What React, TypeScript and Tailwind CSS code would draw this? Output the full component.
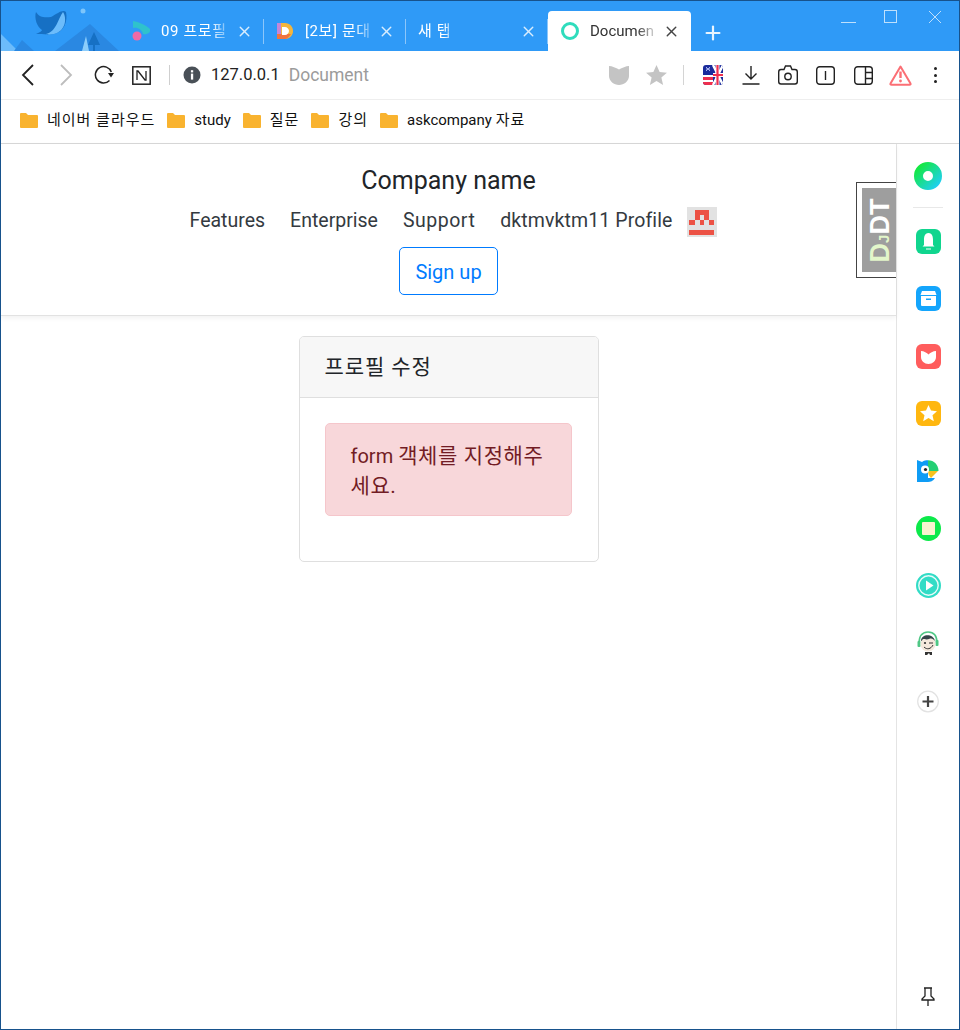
import { X, Plus } from 'lucide-react'

function Wallpaper() {
  return (
    <svg width="121" height="50" viewBox="0 0 121 50" className="shrink-0">
      <path d="M0 33 L17 50 H0Z" fill="#6cbcfb" />
      <path d="M13 50 L21 39 L33 50Z" fill="#2a88e2" />
      <path d="M54 50 L89 23 L118 50Z" fill="#2a88e2" />
      <path d="M81 50 L85 35 L88 50Z" fill="#8ccdfb" />
      <path d="M87 44 L93 31 L99 44 H94 V50 H92 V44Z" fill="#1670c4" />
      <circle cx="82" cy="10" r="2.5" fill="#7cc5fb" />
      <path d="M35 11 C38 16 43 17 50 16 C57 12 62 8 65 11 C67 20 63 31 53 33 C47 34 40 33 35 33 C39 31 41 30 41 29 C36 26 33 17 35 11Z" fill="#1670c4" />
      <path d="M62 11 C66 17 65 30 53 33 C47 34 45 33 45 33 C55 31 57 18 62 11Z" fill="#6cbcfb" />
    </svg>
  )
}

function TabFavicon({ kind }: { kind: 'first' | 'dict' | 'ring' }) {
  if (kind === 'first') {
    return (
      <svg width="18" height="21" viewBox="0 0 18 21" className="shrink-0">
        <path d="M1 0 C7 1 14 4 18 8 C19 11 16 14 11 13 C10 9 6 6 1 7Z" fill="#2fc2cc" />
        <circle cx="5" cy="15" r="4.5" fill="#f06aa6" />
      </svg>
    )
  }
  if (kind === 'dict') {
    return (
      <svg width="18" height="18" viewBox="0 0 18 18" className="shrink-0">
        <path d="M1 1 H9 C14 1 17 5 17 9 C17 13 14 17 9 17 H1Z" fill="#f4b63c" />
        <path d="M1 1 H5 V17 H1Z" fill="#c587d8" />
        <path d="M1 12 H15 C13 15 11 17 9 17 H1Z" fill="#f0743e" />
        <path d="M6 5 H9 C11 5 13 7 13 9 C13 11 11 13 9 13 H6Z" fill="#fff" />
      </svg>
    )
  }
  return <span className="w-[18px] h-[18px] shrink-0 rounded-full border-[3px] border-[#2fdcbc]" />
}

function Tab({ title, icon }: { title: string; icon?: 'first' | 'dict' }) {
  return (
    <div className="relative w-[142px] h-10 flex items-center shrink-0 text-white">
      {icon === 'first' && <span className="w-[39px] flex pl-[10px]"><TabFavicon kind={icon} /></span>}
      {icon === 'dict' && <span className="w-[41px] flex pl-[12px]"><TabFavicon kind={icon} /></span>}
      {!icon && <span className="w-3" />}
      <span className="flex-1 text-[15px] tracking-[0.6px] whitespace-nowrap">
        <span className="inline-block pr-1 [mask-image:linear-gradient(90deg,#000_70%,rgba(0,0,0,0.15))]">{title}</span>
      </span>
      <X size={17} strokeWidth={2} className="text-[#d9edfe] shrink-0 mr-[11px]" />
      <span className="absolute right-0 top-[8px] h-[25px] w-px bg-[#8cc6fa]" />
    </div>
  )
}

function Toolbar() {
  return (
    <div className="h-[49px] flex items-center border-b border-[#eeeeee] bg-white shrink-0">
      <svg width="14" height="22" viewBox="0 0 14 22" fill="none" stroke="#222" strokeWidth="1.8" className="ml-[20px]"><path d="M12 1 L2 11 L12 21" /></svg>
      <svg width="14" height="22" viewBox="0 0 14 22" fill="none" stroke="#bdbdbd" strokeWidth="1.8" className="ml-[24px]"><path d="M2 1 L12 11 L2 21" /></svg>
      <svg width="20" height="20" viewBox="0 0 20 20" fill="none" className="ml-[21px]">
        <path d="M15.5 15.5 A8.2 8.2 0 1 1 17.3 7" stroke="#222" strokeWidth="1.5" />
        <path d="M14 8 L20 8 L17 12.5Z" fill="#222" />
      </svg>
      <svg width="19" height="19" viewBox="0 0 19 19" fill="none" className="ml-[18px]">
        <rect x="0.8" y="0.8" width="17.4" height="17.4" stroke="#222" strokeWidth="1.5" />
        <path d="M5 14 V5 H6 L13 14 H14 V5" stroke="#222" strokeWidth="1.3" />
      </svg>
      <span className="w-px h-5 bg-[#cfcfcf] ml-[18px]" />
      <svg width="18" height="18" viewBox="0 0 18 18" className="ml-[13px]">
        <circle cx="9" cy="9" r="8.5" fill="#495057" />
        <rect x="7.9" y="7.6" width="2.3" height="6" fill="#fff" />
        <rect x="7.9" y="4.2" width="2.3" height="2.2" fill="#fff" />
      </svg>
      <span className="ml-[10px] pt-px text-[16.5px] text-[#222]">127.0.0.1</span>
      <span className="ml-[9px] pt-px text-[17.5px] text-[#9b9b9b]">Document</span>
      <div className="ml-auto flex items-center">
        <svg width="20" height="20" viewBox="0 0 20 20"><path d="M0 1 C3 1 7 3 10 4.5 C13 3 17 1 20 1 V11 C20 16 15 20 10 20 C5 20 0 16 0 11Z" fill="#c4c4c4" /></svg>
        <svg width="21" height="20" viewBox="0 0 24 23" className="ml-[17px]"><path d="M12 0 L15.6 8 L24 8.8 L17.6 14.4 L19.6 23 L12 18.4 L4.4 23 L6.4 14.4 L0 8.8 L8.4 8Z" fill="#c4c4c4" /></svg>
        <span className="w-px h-5 bg-[#d4d4d4] ml-[16px]" />
        <svg width="20" height="20" viewBox="0 0 20 20" className="ml-[19px]">
          <defs><clipPath id="flagClip"><rect width="20" height="20" rx="3" /></clipPath></defs>
          <g clipPath="url(#flagClip)">
            <rect width="20" height="20" fill="#1b2b9b" />
            <path d="M0 10 H10 V12 H0Z M0 15 H10 V17 H0Z" fill="#fff" />
            <path d="M0 12 H10 V15 H0Z M0 17 H10 V20 H0Z" fill="#ee2f4e" />
            <path d="M3 2 L5 4 L7 2 M3 6 L5 4 L7 6 M3 4 H7" stroke="#a8b4f0" strokeWidth="1" fill="none" />
            <path d="M10 0 L20 20 M20 0 L10 20" stroke="#fff" strokeWidth="2.4" />
            <path d="M10 10 H20 M14.5 0 V20" stroke="#fff" strokeWidth="4" />
            <path d="M10 10 H20 M14.5 0 V20" stroke="#ee2f4e" strokeWidth="2.2" />
          </g>
        </svg>
        <svg width="18" height="19" viewBox="0 0 18 19" fill="none" stroke="#222" strokeWidth="1.4" className="ml-[19px]">
          <path d="M9 0 V13 M3.5 7.5 L9 13 L14.5 7.5 M0.5 18 H17.5" />
        </svg>
        <svg width="20" height="20" viewBox="0 0 20 20" fill="none" stroke="#222" strokeWidth="1.4" className="ml-[18px]">
          <path d="M3 4.5 H6 L7.5 1 H12.5 L14 4.5 H17 Q19.3 4.5 19.3 7 V16.5 Q19.3 19 17 19 H3 Q0.7 19 0.7 16.5 V7 Q0.7 4.5 3 4.5Z" />
          <circle cx="10" cy="11.5" r="3.2" />
        </svg>
        <svg width="19" height="19" viewBox="0 0 19 19" fill="none" stroke="#222" strokeWidth="1.4" className="ml-[18px]">
          <rect x="0.7" y="0.7" width="17.6" height="17.6" rx="3" />
          <path d="M9.5 5 V14" />
        </svg>
        <svg width="19" height="19" viewBox="0 0 19 19" fill="none" stroke="#222" strokeWidth="1.4" className="ml-[19px]">
          <rect x="0.7" y="0.7" width="17.6" height="17.6" rx="3" />
          <path d="M11.5 0.7 V18.3 M11.5 6.5 H18.3 M11.5 12.5 H18.3" />
        </svg>
        <svg width="23" height="21" viewBox="0 0 23 21" fill="none" className="ml-[16px]">
          <path d="M11.5 1.5 L21.5 18.5 Q22 19.8 20.5 19.8 H2.5 Q1 19.8 1.5 18.5Z" stroke="#fb6f75" strokeWidth="2" strokeLinejoin="round" />
          <path d="M11.5 6.5 V13" stroke="#fb6f75" strokeWidth="2.4" />
          <circle cx="11.5" cy="16" r="1.4" fill="#fb6f75" />
        </svg>
        <span className="ml-[22px] mr-[22px] flex flex-col gap-[3.5px]">
          <span className="w-[3px] h-[3px] rounded-full bg-[#222]" />
          <span className="w-[3px] h-[3px] rounded-full bg-[#222]" />
          <span className="w-[3px] h-[3px] rounded-full bg-[#222]" />
        </span>
      </div>
    </div>
  )
}

function FolderIcon() {
  return (
    <svg width="18" height="15" viewBox="0 0 18 15" className="shrink-0">
      <path d="M0 1 Q0 0 1 0 H6 L8 2 H17 Q18 2 18 3 V14 Q18 15 17 15 H1 Q0 15 0 14Z" fill="#f9b32f" />
    </svg>
  )
}

function Ko({ children }: { children: string }) {
  return <span className="text-[15px] tracking-[1px]">{children}</span>
}

const bookmarks = [
  { latin: '', ko: '네이버 클라우드' },
  { latin: 'study', ko: '' },
  { latin: '', ko: '질문' },
  { latin: '', ko: '강의' },
  { latin: 'askcompany ', ko: '자료' },
]

function Bookmarks() {
  return (
    <div className="h-11 flex items-center pl-[19px] pb-[3px] gap-3 bg-white border-b border-[#d8d8d8] shrink-0">
      {bookmarks.map((b) => (
        <div key={b.latin + b.ko} className="flex items-center gap-[9px] text-[15px] text-[#111]">
          <FolderIcon />
          <span className="whitespace-pre">{b.latin}{b.ko && <Ko>{b.ko}</Ko>}</span>
        </div>
      ))}
    </div>
  )
}

function Identicon() {
  return (
    <svg width="30" height="30" viewBox="0 0 30 30" className="ml-[15px] shrink-0">
      <rect width="30" height="30" fill="#e2e2e2" />
      <path d="M8 3 H22 V8 H8Z M8 8 H13 V13 H8Z M17 8 H22 V13 H17Z M2 13 H8 V18 H2Z M13 13 H17 V18 H13Z M22 13 H27 V18 H22Z M2 23 H27 V28 H2Z" fill="#ec5245" />
    </svg>
  )
}

function Navbar() {
  return (
    <div className="h-[172px] flex flex-col items-center border-b border-[#e2e2e2] shadow-[0_2px_5px_rgba(0,0,0,0.06)] pt-[22px]">
      <h5 className="text-[25px] leading-[30px] text-[#212529]">Company name</h5>
      <nav className="flex items-start mt-[10px] pl-[10px] h-[32px] text-[19.5px] leading-[30px] text-[#343a40] gap-[25px]">
        <span>Features</span>
        <span>Enterprise</span>
        <span className="tracking-[0.5px]">Support</span>
        <span className="flex items-start tracking-[0.1px]">dktmvktm11 Profile<span className="pt-[1px]"><Identicon /></span></span>
      </nav>
      <button className="mt-[9px] w-[99px] h-12 pt-px rounded-[5px] border border-[#007bff] text-[#007bff] text-[20px]">Sign up</button>
    </div>
  )
}

function ProfileCard() {
  return (
    <div className="w-[300px] mx-auto mt-[20px] border border-[#dfdfdf] rounded-[5px] overflow-hidden">
      <div className="h-[61px] flex items-center px-[25px] pt-[2px] bg-[#f7f7f7] border-b border-[#dfdfdf] text-[21px] tracking-[0.9px] text-[#212529]">프로필 수정</div>
      <div className="pl-[25px] pr-[26px] pt-[25px] pb-[45px]">
        <div className="pl-[25px] pr-[20px] pt-[17px] pb-[14px] bg-[#f8d7da] border border-[#f5c6cb] rounded-[5px] text-[20px] leading-[30px] text-[#721c24] whitespace-nowrap">
          <div>form <span className="text-[21px] tracking-[0.6px]">객체를 지정해주</span></div>
          <div className="text-[21px] tracking-[0.6px]">세요.</div>
        </div>
      </div>
    </div>
  )
}

function Rounded({ bg, children }: { bg: string; children: React.ReactNode }) {
  return (
    <svg width="25" height="25" viewBox="0 0 25 25">
      <rect width="25" height="25" rx="6" fill={bg} />
      {children}
    </svg>
  )
}

function Sidebar() {
  return (
    <aside className="w-[63px] shrink-0 flex flex-col items-center border-l border-[#e4e4e4] pt-[18px] pb-[23px]">
      <svg width="28" height="28" viewBox="0 0 28 28">
        <defs>
          <linearGradient id="ringGrad" x1="0" y1="0" x2="1" y2="1"><stop offset="0" stopColor="#14e83f" /><stop offset="1" stopColor="#1fd0ee" /></linearGradient>
        </defs>
        <circle cx="14" cy="14" r="9.5" fill="none" stroke="url(#ringGrad)" strokeWidth="9" />
      </svg>
      <span className="w-[30px] h-px bg-[#e8e8e8] mt-[17px] mb-[21px]" />
      <div className="flex flex-col items-center gap-[32.4px] [&>*]:h-[25px]">
        <Rounded bg="#10d58e">
          <path d="M12.5 4 C8.5 4 8 8 8 11 V16 L6.5 17.5 H18.5 L17 16 V11 C17 8 16.5 4 12.5 4Z" fill="#fff" />
          <path d="M10 19.5 H15 V20.5 H10Z" fill="#fff" />
        </Rounded>
        <Rounded bg="#14a5fc">
          <path d="M6 5 H19 L20.5 9 H4.5Z M5 10 H20 V19 Q20 20 19 20 H6 Q5 20 5 19Z" fill="#fff" />
          <rect x="10" y="12.5" width="5" height="1.5" fill="#14a5fc" />
        </Rounded>
        <Rounded bg="#ff5d5d">
          <path d="M5 7 C8 7 11 9 12.5 10.5 C14 9 17 7 20 7 V13 C20 17 16.5 20 12.5 20 C8.5 20 5 17 5 13Z" fill="#fff" />
        </Rounded>
        <Rounded bg="#ffb70f">
          <path d="M12.5 4 L15 9.6 L21 10.2 L16.5 14.2 L17.8 20.2 L12.5 17.1 L7.2 20.2 L8.5 14.2 L4 10.2 L10 9.6Z" fill="#fff" />
        </Rounded>
        <svg width="22" height="25" viewBox="0 0 22 25">
          <path d="M0 1 L5 3 C7 1.5 9 1.3 11 1.3 V23 H0Z" fill="#0f9cf5" />
          <path d="M11 1.3 C17 1.3 21.5 6 21.5 12 H11Z" fill="#24cf74" />
          <path d="M11 12 H21 L14 19 C12 17 11 15 11 12Z" fill="#f7c21e" />
          <path d="M11 19 H18 C16 22 13.5 23 11 23Z" fill="#0f9cf5" />
          <circle cx="8" cy="10.5" r="4" fill="#fff" />
          <circle cx="8.5" cy="10.5" r="1.6" fill="#222" />
        </svg>
        <svg width="25" height="25" viewBox="0 0 25 25">
          <circle cx="12.5" cy="12.5" r="12.5" fill="#0ce94a" />
          <rect x="6" y="6" width="13" height="13" rx="1" fill="#f8f3cf" />
        </svg>
        <svg width="25" height="25" viewBox="0 0 25 25">
          <circle cx="12.5" cy="12.5" r="12.5" fill="#32dcc6" />
          <circle cx="12.5" cy="12.5" r="9.7" fill="none" stroke="#e8fbf8" strokeWidth="1.4" />
          <path d="M10 7.5 L17.5 12.5 L10 17.5Z" fill="#fff" />
        </svg>
        <svg width="22" height="25" viewBox="0 0 22 25">
          <path d="M2 13 C2 4 6 1 11 1 C16 1 20 4 20 12" fill="none" stroke="#4fc785" strokeWidth="1.6" />
          <rect x="0.5" y="10" width="3" height="6" rx="1" fill="#4fc785" />
          <rect x="18.5" y="9" width="3" height="6" rx="1" fill="#4fc785" />
          <ellipse cx="11" cy="13" rx="7.5" ry="7.5" fill="#f5e8dc" />
          <path d="M4 10 C4 3 16 2 18 10 C16 8 15 7 12 8 C10 9 7 8 6 8 C5 9 5 10 4 10Z" fill="#36454a" />
          <circle cx="8" cy="12" r="1.1" fill="#333" />
          <path d="M12 12 H16 M7 16 C10 19 14 18 16 14" stroke="#333" strokeWidth="1" fill="none" />
          <path d="M8 21 H15 V24 H13 L12 22 L10 24 H8Z" fill="#333" />
        </svg>
        <svg width="22" height="25" viewBox="0 0 22 25" className="translate-y-[1px]">
          <circle cx="11" cy="12.5" r="10.3" fill="#fff" stroke="#e2e2e2" strokeWidth="1.2" />
          <path d="M11 7 V18 M5.5 12.5 H16.5" stroke="#444" strokeWidth="2.2" />
        </svg>
      </div>
      <svg width="16" height="19" viewBox="0 0 16 19" fill="none" stroke="#222" strokeWidth="1.3" className="mt-auto">
        <path d="M4 1 H12 M5 1 V9 L2 12 V13 H14 V12 L11 9 V1 M8 13 V19" />
      </svg>
    </aside>
  )
}

export default function App() {
  return (
    <div className="w-[960px] h-[1030px] flex flex-col overflow-hidden bg-white border border-[#17528c] font-['Roboto','Noto_Sans_CJK_KR',sans-serif]">
      <div className="relative h-[50px] flex items-end bg-[#2f9af7] shrink-0">
        <Wallpaper />
        <Tab title="09 프로필" icon="first" />
        <Tab title="[2보] 문대" icon="dict" />
        <Tab title="새 탭" />
        <div className="w-[143px] h-10 shrink-0 flex items-center bg-white rounded-t-[4px] pl-[13px]">
          <TabFavicon kind="ring" />
          <span className="ml-[11px] w-[66px] text-[15px] text-[#333] whitespace-nowrap [mask-image:linear-gradient(90deg,#000_70%,rgba(0,0,0,0.15))]">Documen</span>
          <X size={17} strokeWidth={2} className="ml-[7px] text-[#444]" />
        </div>
        <Plus size={22} strokeWidth={2.4} className="text-[#e8f4fe] ml-[11px] mb-[7px]" />
        <div className="absolute right-[17px] top-[9px] flex items-start">
          <span className="w-[15px] h-px bg-[#bfe0fc] mt-[12px]" />
          <span className="w-[13px] h-[13px] border border-[#bfe0fc] ml-[28px]" />
          <svg width="14" height="14" viewBox="0 0 14 14" stroke="#bfe0fc" strokeWidth="1" className="ml-[31px]"><path d="M1 1 L13 13 M13 1 L1 13" /></svg>
        </div>
      </div>
      <Toolbar />
      <Bookmarks />
      <div className="flex-1 flex min-h-0">
        <main className="relative flex-1 min-w-0">
          <Navbar />
          <ProfileCard />
          <div className="absolute right-0 top-[38px] w-10 h-[96px] border border-[#444] border-r-0 bg-white pl-[5px] py-[5px]">
            <div className="h-[84px] bg-[#9e9e9e] flex items-center justify-center overflow-hidden">
              <span className="translate-x-[2px] -rotate-90 whitespace-nowrap font-bold text-[27px] leading-none font-['Liberation_Sans',sans-serif]">
                <span className="text-[#e3f6ca]">D<span className="text-[15px]">J</span></span><span className="text-white">DT</span>
              </span>
            </div>
          </div>
        </main>
        <Sidebar />
      </div>
    </div>
  )
}
